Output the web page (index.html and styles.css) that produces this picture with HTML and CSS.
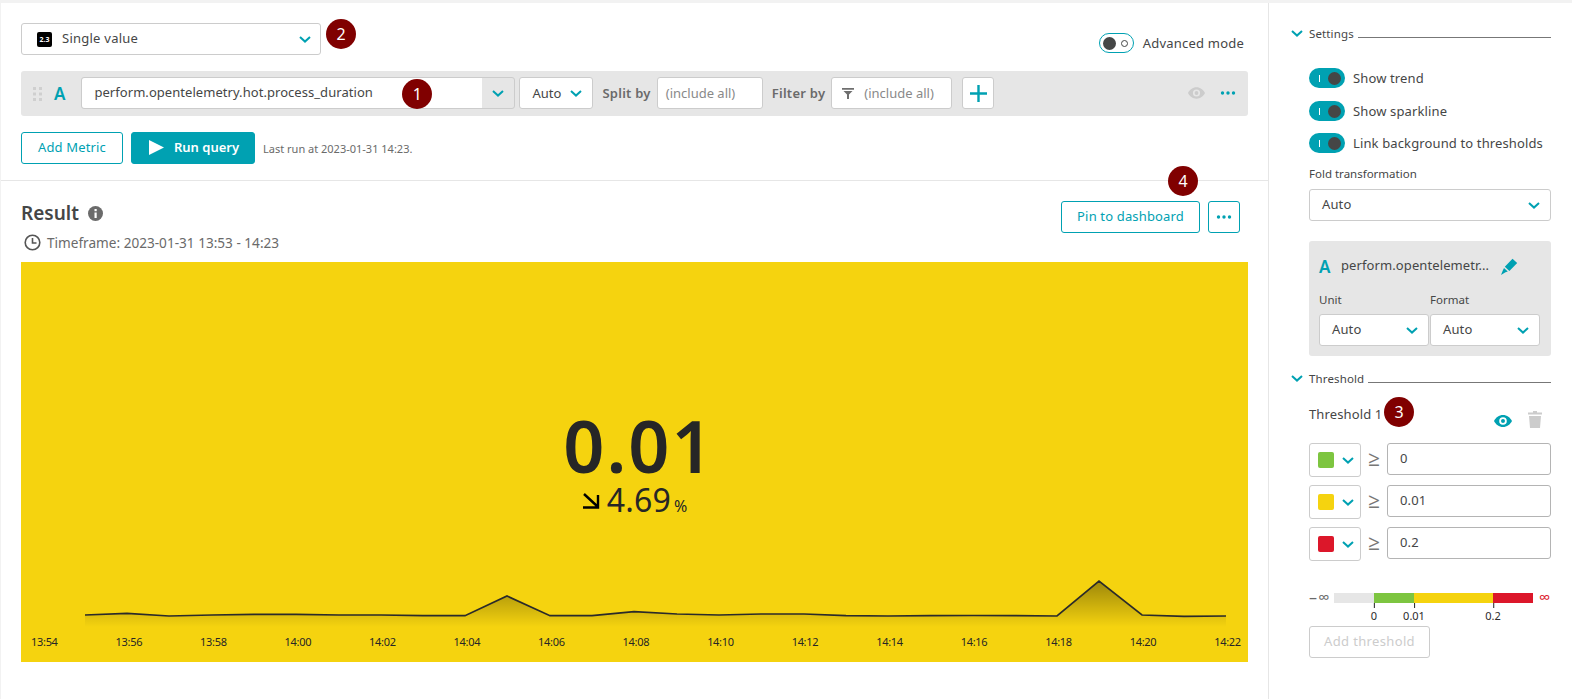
FILE: index.html
```html
<!DOCTYPE html>
<html lang="en">
<head>
<meta charset="utf-8">
<title>Single value</title>
<link rel="stylesheet" href="styles.css">
</head>
<body>
<svg class="defs" width="0" height="0" aria-hidden="true">
  <symbol id="chev" viewBox="0 0 12 7"><path d="M1 1l5 4.600L11 1" fill="none" stroke="#00a1b2" stroke-width="2"/></symbol>
  <symbol id="dots" viewBox="0 0 16 4"><circle cx="2.500" cy="2" r="1.700"/><circle cx="8" cy="2" r="1.700"/><circle cx="13.500" cy="2" r="1.700"/></symbol>
  <symbol id="eye" viewBox="0 0 18 12"><path fill-rule="evenodd" d="M9 0c4 0 7.300 2.600 9 6-1.700 3.400-5 6-9 6s-7.300-2.600-9-6c1.700-3.400 5-6 9-6zm0 2.200a3.800 3.800 0 1 0 0 7.600 3.800 3.800 0 0 0 0-7.600zM9 4a2 2 0 1 1 0 4 2 2 0 0 1 0-4z"/></symbol>
</svg>
<div class="app">
  <main class="main">
    <section class="builder">
      <div class="viz-row">
        <div class="select viz-select">
          <span class="viz-icon">2.3</span>
          <span class="grow viz-name">Single value</span>
          <svg class="chev"><use href="#chev"/></svg>
        </div>
        <span class="badge badge-2">2</span>
        <div class="advanced">
          <span class="adv-toggle"><i class="adv-knob"></i><i class="adv-ring"></i></span>
          <span>Advanced mode</span>
        </div>
      </div>
      <div class="query-row">
        <svg class="grip" width="9" height="14" viewBox="0 0 9 14" fill="#cfcfcf"><rect width="3" height="3"/><rect x="6" width="3" height="3"/><rect y="5.500" width="3" height="3"/><rect x="6" y="5.500" width="3" height="3"/><rect y="11" width="3" height="3"/><rect x="6" y="11" width="3" height="3"/></svg>
        <span class="letter">A</span>
        <div class="metric-input">
          <span class="metric-text">perform.opentelemetry.hot.process_duration</span>
          <span class="metric-drop"><svg class="chev"><use href="#chev"/></svg></span>
          <span class="badge badge-1">1</span>
        </div>
        <div class="field auto-field"><span class="grow">Auto</span><svg class="chev"><use href="#chev"/></svg></div>
        <span class="q-label split-label">Split by</span>
        <div class="field split-field">(include all)</div>
        <span class="q-label filter-label">Filter by</span>
        <div class="field filter-field">
          <svg class="funnel" width="12" height="11" viewBox="0 0 12 11"><path d="M0 0h12v1.800H0zM1.500 3h9L7 6.500V11H5V6.500z" fill="#6f6f6f"/></svg>
          (include all)
        </div>
        <div class="field plus-field"><svg width="17" height="17" viewBox="0 0 17 17"><path d="M8.500 0v17M0 8.500h17" stroke="#00a1b2" stroke-width="2.400"/></svg></div>
        <span class="grow"></span>
        <svg class="q-eye" fill="#cccccc"><use href="#eye"/></svg>
        <svg class="q-dots" fill="#00a1b2"><use href="#dots"/></svg>
      </div>
      <div class="action-row">
        <button class="btn btn-outline add-metric">Add Metric</button>
        <button class="btn btn-primary run-query"><svg width="15" height="15" viewBox="0 0 15 15"><path d="M0 0l15 7.500L0 15z" fill="#fff"/></svg>Run query</button>
        <span class="last-run">Last run at 2023-01-31 14:23.</span>
      </div>
    </section>
    <section class="result">
      <div class="result-head">
        <div>
          <h2 class="result-title">Result
            <svg width="15" height="15" viewBox="0 0 15 15"><circle cx="7.500" cy="7.500" r="7.500" fill="#6b6b6b"/><rect x="6.500" y="6.500" width="2.200" height="5.500" fill="#fff"/><rect x="6.500" y="3" width="2.200" height="2.200" fill="#fff"/></svg>
          </h2>
          <div class="timeframe">
            <svg width="17" height="17" viewBox="0 0 17 17"><circle cx="8.500" cy="8.500" r="7.300" fill="none" stroke="#555" stroke-width="1.600"/><path d="M8.500 4v5h4" fill="none" stroke="#555" stroke-width="1.600"/></svg>
            Timeframe: 2023-01-31 13:53 - 14:23
          </div>
        </div>
        <div class="result-actions">
          <span class="badge badge-4">4</span>
          <button class="btn btn-outline pin">Pin to dashboard</button>
          <button class="btn btn-outline more"><svg class="q-dots" fill="#00a1b2"><use href="#dots"/></svg></button>
        </div>
      </div>
      <div class="panel">
        <div class="value">0.01</div>
        <div class="trend">
          <svg width="17" height="16" viewBox="0 0 17 16"><path d="M1 1l13 12M15 2v12.500H0" fill="none" stroke="#000" stroke-width="2.400"/></svg>
          <span class="trend-num">4.69</span><span class="trend-unit">%</span>
        </div>
        <svg class="spark" width="1227" height="58" viewBox="21 570 1227 58">
          <defs><linearGradient id="fade" gradientUnits="userSpaceOnUse" x1="0" y1="581" x2="0" y2="627"><stop offset="0" stop-color="#000" stop-opacity=".36"/><stop offset="1" stop-color="#000" stop-opacity="0"/></linearGradient></defs>
          <path fill="url(#fade)" d="M85 615L127 613.300 169 616 212 615 254 614.300 296 614.300 339 615 381 615 423 615.700 465 615.700 507 596 550 615.700 592 615.700 634 611.700 677 614 719 615 761 614 804 614 846 615.700 888 616 930 615.700 973 615.500 1015 615.700 1057 616 1099 581 1142 615 1184 616.300 1226 616V628H85z"/>
          <polyline fill="none" stroke="#2a2a2a" stroke-width="1.700" points="85,615 127,613.300 169,616 212,615 254,614.300 296,614.300 339,615 381,615 423,615.700 465,615.700 507,596 550,615.700 592,615.700 634,611.700 677,614 719,615 761,614 804,614 846,615.700 888,616 930,615.700 973,615.500 1015,615.700 1057,616 1099,581 1142,615 1184,616.300 1226,616"/>
        </svg>
        <div class="axis">
          <span>13:54</span><span>13:56</span><span>13:58</span><span>14:00</span><span>14:02</span><span>14:04</span><span>14:06</span><span>14:08</span><span>14:10</span><span>14:12</span><span>14:14</span><span>14:16</span><span>14:18</span><span>14:20</span><span>14:22</span>
        </div>
      </div>
    </section>
  </main>
  <aside class="side">
    <div class="sec-head settings-head"><svg class="chev"><use href="#chev"/></svg><span>Settings</span><i class="sec-line"></i></div>
    <div class="toggle-row first"><span class="toggle"><i class="t-bar"></i><i class="t-knob"></i></span>Show trend</div>
    <div class="toggle-row second"><span class="toggle"><i class="t-bar"></i><i class="t-knob"></i></span>Show sparkline</div>
    <div class="toggle-row third"><span class="toggle"><i class="t-bar"></i><i class="t-knob"></i></span>Link background to thresholds</div>
    <div class="small-label fold-label">Fold transformation</div>
    <div class="select side-select"><span class="grow">Auto</span><svg class="chev"><use href="#chev"/></svg></div>
    <div class="metric-box">
      <div class="box-title">
        <span class="letter">A</span>
        <span class="box-name">perform.opentelemetr...</span>
        <svg width="17" height="17" viewBox="0 0 17 17"><path d="M11.500.800l4.700 4.200-7.800 8-4.600-4.200zM3 10l3.800 3.600-2.300.700L0 17l1.800-4.500z" fill="#00a1b2"/></svg>
      </div>
      <div class="box-grid">
        <div><div class="small-label">Unit</div><div class="select box-select"><span class="grow">Auto</span><svg class="chev"><use href="#chev"/></svg></div></div>
        <div><div class="small-label">Format</div><div class="select box-select"><span class="grow">Auto</span><svg class="chev"><use href="#chev"/></svg></div></div>
      </div>
    </div>
    <div class="sec-head threshold-head"><svg class="chev"><use href="#chev"/></svg><span>Threshold</span><i class="sec-line"></i></div>
    <div class="th-title">
      <span class="grow th-name">Threshold 1</span>
      <span class="badge badge-3">3</span>
      <svg class="th-eye" fill="#00a1b2"><use href="#eye"/></svg>
      <svg class="th-trash" width="14" height="17" viewBox="0 0 14 17" fill="#cccccc"><path d="M5 0h4v1.500h5V3.500H0V1.500h5zM1 5h12l-1 12H2z"/></svg>
    </div>
    <div class="th-row">
      <div class="select swatch-select"><i class="swatch green"></i><svg class="chev"><use href="#chev"/></svg></div>
      <span class="gte">≥</span>
      <div class="select th-input">0</div>
    </div>
    <div class="th-row">
      <div class="select swatch-select"><i class="swatch yellow"></i><svg class="chev"><use href="#chev"/></svg></div>
      <span class="gte">≥</span>
      <div class="select th-input">0.01</div>
    </div>
    <div class="th-row">
      <div class="select swatch-select"><i class="swatch red"></i><svg class="chev"><use href="#chev"/></svg></div>
      <span class="gte">≥</span>
      <div class="select th-input">0.2</div>
    </div>
    <div class="scale">
      <span class="inf neg">– ∞</span>
      <div class="bar">
        <i class="seg seg-grey"></i>
        <i class="seg seg-green"><b class="tick">0</b></i>
        <i class="seg seg-yellow"><b class="tick">0.01</b></i>
        <i class="seg seg-red"><b class="tick">0.2</b></i>
      </div>
      <span class="inf pos">∞</span>
    </div>
    <button class="btn add-threshold">Add threshold</button>
  </aside>
</div>
</body>
</html>
```
FILE: styles.css
```css
* { box-sizing: border-box; }
html, body { margin: 0; height: 100%; }
body {
  background: #fff;
  color: #454646;
  font-family: "Noto Sans", "Open Sans", sans-serif;
  font-size: 13px;
  overflow: hidden;
}
.defs { position: absolute; }
i { display: block; font-style: normal; }
.grow { flex: 1; }
.chev { width: 12px; height: 7px; flex: none; display: block; }

.app {
  display: flex;
  height: 699px;
  border-top: 3px solid #f2f2f2;
  border-left: 1px solid #f2f2f2;
}
.main { width: 1267px; flex: none; }
.side {
  flex: 1;
  border-left: 1px solid #e6e6e6;
  padding: 22px 21px 0 40px;
  letter-spacing: .13px;
}

.badge {
  position: absolute;
  width: 30px;
  height: 30px;
  border-radius: 50%;
  background: #800000;
  color: #fff;
  font-size: 16px;
  letter-spacing: 0;
  display: flex;
  align-items: center;
  justify-content: center;
}

.select, .field {
  display: flex;
  align-items: center;
  background: #fff;
  border: 1px solid #cccccc;
  border-radius: 3px;
  height: 32px;
  padding: 0 10px 0 12px;
}
.select .grow { padding-bottom: 2px; }

.builder { height: 178px; border-bottom: 1px solid #e6e6e6; padding: 20px 20px 0; }
.viz-row { display: flex; height: 32px; position: relative; }
.viz-select { width: 300px; padding: 0 9px 0 15px; }
.viz-icon {
  width: 15px; height: 15px; margin-right: 10px;
  background: #000; color: #fff; border-radius: 2px;
  font-size: 7px; font-weight: 700; line-height: 15px; text-align: center;
}
.viz-name { letter-spacing: .25px; }
.badge-2 { left: 305px; top: -4px; }
.advanced { margin-left: auto; display: flex; align-items: center; gap: 9px; height: 20px; margin-top: 10px; margin-right: 4px; letter-spacing: .2px; }
.adv-toggle {
  width: 35px; height: 20px;
  border: 1px solid #00a1b2; border-radius: 10px;
  display: flex; align-items: center; padding: 0 5px 0 3px; justify-content: space-between;
}
.adv-knob { width: 13px; height: 13px; border-radius: 50%; background: #454646; }
.adv-ring { width: 7px; height: 7px; border-radius: 50%; border: 1px solid #454646; }

.query-row {
  display: flex; align-items: center;
  height: 45px; margin-top: 16px;
  background: #e6e6e6; border-radius: 3px;
  padding: 0 12px;
}
.grip { margin-right: 12px; flex: none; }
.letter { color: #00a1b2; font-size: 17px; font-weight: 600; }
.query-row .letter { margin-right: 15px; }
.metric-input {
  position: relative;
  display: flex; width: 434px; height: 32px;
  background: #e6e6e6; border: 1px solid #cccccc; border-radius: 3px;
  margin: -1px 0 0 1px;
  overflow: visible;
}
.metric-text { flex: 1; background: #fff; line-height: 29px; height: 30px; padding-left: 12px; border-radius: 3px 0 0 3px; letter-spacing: .05px; }
.metric-drop { width: 32px; display: flex; align-items: center; justify-content: center; }
.badge-1 { left: 320px; top: 1px; }
.auto-field { width: 74px; margin: -1px 0 0 4px; }
.q-label { font-weight: 600; color: #6a6a6a; margin-top: -1px; letter-spacing: .25px; }
.split-label { margin-left: 9px; }
.split-field { width: 106px; margin: -1px 0 0 6px; color: #898989; padding-left: 8px; }
.filter-label { margin-left: 9px; }
.filter-field { width: 121px; margin: -1px 0 0 6px; color: #898989; padding-left: 10px; }
.funnel { margin-right: 10px; }
.plus-field { width: 32px; margin: -1px 0 0 10px; padding: 0; justify-content: center; }
.q-eye { width: 17px; height: 12px; margin: -1px 15px 0 0; display: block; }
.q-dots { width: 16px; height: 4px; display: block; }
.query-row .q-dots { margin-top: -1px; }

.action-row { display: flex; align-items: center; margin-top: 16px; height: 32px; }
.btn {
  font: inherit; height: 32px; border-radius: 3px; padding: 0 0 2px;
  display: flex; align-items: center; justify-content: center;
  background: #fff;
}
.btn-outline { border: 1px solid #00a1b2; color: #00a1b2; letter-spacing: .15px; }
.btn-primary { border: 1px solid #00a1b2; background: #00a1b2; color: #fff; font-weight: 600; gap: 10px; padding-left: 2px; }
.add-metric { width: 102px; }
.run-query { width: 124px; margin-left: 8px; }
.last-run { margin-left: 8px; font-size: 11px; color: #6a6a6a; }

.result { padding: 20px 20px 0; }
.result-head { display: flex; justify-content: space-between; height: 61px; }
.result-title {
  margin: 0; font-size: 19px; font-weight: 600; line-height: 25px; color: #454646;
  display: flex; align-items: center; gap: 9px;
}
.timeframe { display: flex; align-items: center; gap: 6px; margin-top: 4px; padding-left: 3px; height: 24px; color: #6a6a6a; font-size: 13.600px; }
.result-actions { position: relative; display: flex; gap: 8px; padding-right: 8px; align-items: flex-start; }
.pin { width: 139px; }
.more { width: 32px; padding: 0; }
.badge-4 { left: 107px; top: -35px; }

.panel {
  height: 400px; background: #f5d30f;
  display: flex; flex-direction: column; align-items: center;
  padding-top: 148px;
  color: #262626;
}
.value { font-size: 72px; font-weight: 600; line-height: 71px; letter-spacing: 2px; margin-left: 9px; }
.trend { display: flex; align-items: baseline; height: 38px; margin-left: 1px; }
.trend svg { margin-right: 7px; align-self: center; margin-top: 1px; }
.trend-num { font-size: 32px; line-height: 38px; letter-spacing: .2px; }
.trend-unit { font-size: 16px; margin-left: 3px; }
.spark { display: block; margin-top: 51px; flex: none; }
.axis {
  width: 100%; display: flex; justify-content: space-between;
  padding: 6px 7px 0 10px; font-size: 11px; line-height: 16px;
  letter-spacing: -.3px;
}

.sec-head { display: flex; align-items: center; height: 16px; margin-left: -18px; font-size: 11.500px; }
.sec-head span { margin-left: 6px; }
.sec-line { flex: 1; height: 1px; background: #777; margin: 8px 0 0 4px; }
.toggle-row { display: flex; align-items: center; height: 20px; gap: 8px; }
.toggle-row.first { margin-top: 27px; }
.toggle-row.second { margin-top: 13px; }
.toggle-row.third { margin-top: 12px; }
.toggle {
  width: 36px; height: 20px; border-radius: 10px; background: #00a1b2;
  display: flex; align-items: center; justify-content: space-between; padding: 0 3px 0 10px;
}
.t-bar { width: 1px; height: 7px; background: #fff; }
.t-knob { width: 13px; height: 13px; border-radius: 50%; background: #454646; margin-right: 1px; }
.small-label { font-size: 11.500px; line-height: 16px; letter-spacing: 0; }
.fold-label { margin-top: 13px; }
.side-select { margin-top: 7px; }
.metric-box { margin-top: 20px; height: 115px; background: #e6e6e6; border-radius: 3px; padding: 15px 10px 0; }
.box-title { display: flex; align-items: center; height: 20px; }
.box-title .letter { width: 22px; }
.box-name { width: 160px; padding-bottom: 2px; letter-spacing: .1px; }
.box-grid { display: grid; grid-template-columns: 110px 110px; gap: 1px; margin-top: 16px; }
.box-select { margin-top: 6px; }
.threshold-head { margin-top: 14px; }
.th-title { display: flex; align-items: center; height: 26px; margin-top: 20px; position: relative; }
.th-name { margin-top: -10px; }
.th-eye { width: 18px; height: 12px; margin: 4px 16px 0 0; display: block; }
.th-trash { margin-right: 9px; margin-top: 0; }
.badge-3 { left: 75px; top: -9px; }
.th-row { display: flex; margin-top: 8px; height: 34px; }
.th-title + .th-row { margin-top: 11px; }
.swatch-select { width: 52px; height: 34px; padding: 0 0 0 8px; justify-content: flex-start; gap: 8px; }
.swatch { width: 16px; height: 16px; border-radius: 2px; flex: none; }
.green { background: #7dc540; }
.yellow { background: #f5d30f; }
.red { background: #dc172a; }
.gte { width: 26px; text-align: center; font-size: 21px; line-height: 30px; color: #777; }
.th-input { width: 164px; padding: 0 0 2px 12px; border-color: #b4b4b4; }
.scale { display: flex; align-items: center; height: 10px; margin-top: 32px; position: relative; }
.inf { font-size: 16px; line-height: 10px; letter-spacing: 0; }
.neg { width: 25px; color: #6a6a6a; white-space: nowrap; margin-top: -2px; word-spacing: -3px; }
.pos { margin: -2px 0 0 6px; color: #dc172a; }
.bar { width: 199px; height: 10px; display: flex; flex: none; }
.seg { height: 10px; position: relative; }
.seg-grey { width: 40px; background: #e6e6e6; }
.seg-green { width: 40px; background: #7dc540; }
.seg-yellow { width: 79px; background: #f5d30f; }
.seg-red { width: 40px; background: #dc172a; }
.tick {
  position: absolute; left: 0; top: 10px; transform: translateX(-50%);
  font-size: 11px; font-weight: 400; color: #2b2b2b; line-height: 14px;
  padding-top: 6px; white-space: nowrap; letter-spacing: 0;
}
.tick::before {
  content: ""; position: absolute; left: 50%; top: 0; width: 1px; height: 5px; background: #222;
}
.add-threshold { width: 121px; margin-top: 23px; border: 1px solid #cccccc; color: #cccccc; letter-spacing: .35px; }
```
